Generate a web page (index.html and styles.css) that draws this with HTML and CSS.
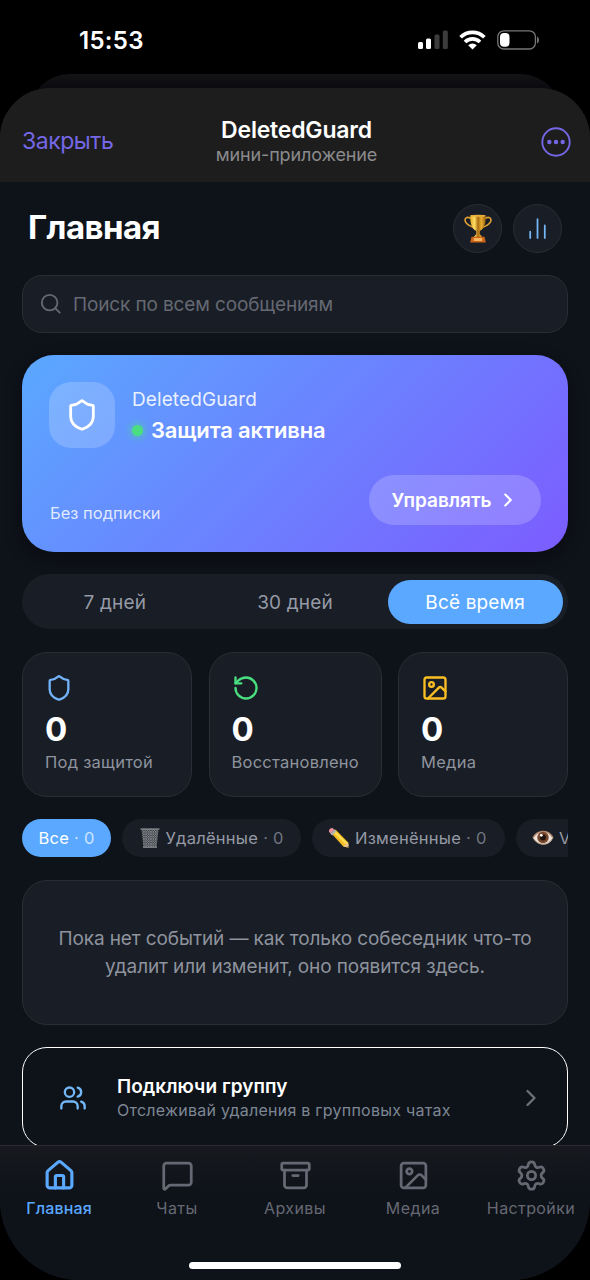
FILE: index.html
```html
<!DOCTYPE html>
<html lang="ru">
<head>
<meta charset="utf-8">
<title>DeletedGuard</title>
<link rel="stylesheet" href="styles.css">
</head>
<body>
<svg class="defs" width="0" height="0" aria-hidden="true">
  <symbol id="shield" viewBox="0 0 24 24"><path d="M20 13c0 5-3.500 7.500-7.660 8.950a1 1 0 0 1-.67-.01C7.500 20.500 4 18 4 13V6a1 1 0 0 1 1-1c2 0 4.500-1.200 6.240-2.720a1.170 1.170 0 0 1 1.520 0C14.510 3.810 17 5 19 5a1 1 0 0 1 1 1z"/></symbol>
  <symbol id="image" viewBox="0 0 24 24"><rect x="3" y="3" width="18" height="18" rx="2"/><circle cx="9" cy="9" r="2"/><path d="m21 15-3.086-3.086a2 2 0 0 0-2.828 0L6 21"/></symbol>
  <symbol id="chevron" viewBox="0 0 24 24"><path d="m9 18 6-6-6-6"/></symbol>
</svg>
<div class="phone">
  <div class="status">
    <span class="time">15:53</span>
    <div class="status-icons">
      <svg width="30" height="19" viewBox="0 0 30 19"><rect x="0" y="12" width="5" height="7" rx="1.500" fill="#fff"/><rect x="8" y="8.500" width="5" height="10.500" rx="1.500" fill="#fff"/><rect x="16.500" y="4.500" width="5" height="14.500" rx="1.500" fill="#3c3c3c"/><rect x="24.800" y="0.500" width="5" height="18.500" rx="1.500" fill="#3c3c3c"/></svg>
      <svg width="27" height="20" viewBox="0 0 27 20"><g fill="none" stroke="#fff" stroke-width="3.700"><path d="M1.600 7.200a17 17 0 0 1 23.800 0"/><path d="M6 12a10.700 10.700 0 0 1 15 0"/></g><path d="M13.500 19.500l-4.300-4.200a6.200 6.200 0 0 1 8.600 0z" fill="#fff"/></svg>
      <svg width="42" height="20" viewBox="0 0 42 20"><rect x=".8" y=".8" width="37.600" height="18.200" rx="6" fill="none" stroke="#777" stroke-width="1.300"/><rect x="3" y="3" width="9.500" height="13.800" rx="4" fill="#fff"/><path d="M40 6.500c2.600 1 2.600 6 0 7z" fill="#777"/></svg>
    </div>
  </div>
  <div class="behind"></div>
  <div class="sheet">
    <header class="bar">
      <span class="close">Закрыть</span>
      <div class="app"><div class="app-name">DeletedGuard</div><div class="app-kind">мини-приложение</div></div>
      <svg class="more" width="30" height="30" viewBox="0 0 30 30"><circle cx="15" cy="15" r="13.700" fill="none" stroke="#7567e6" stroke-width="1.900"/><g fill="#7567e6"><circle cx="8.300" cy="15" r="2.200"/><circle cx="15" cy="15" r="2.200"/><circle cx="21.700" cy="15" r="2.200"/></g></svg>
    </header>
    <main class="content">
      <div class="title-row">
        <h1>Главная</h1>
        <div class="round">
          <svg width="28" height="29" viewBox="0 0 28 29">
            <defs><linearGradient id="gold"><stop offset="0" stop-color="#e6ae2a"/><stop offset=".28" stop-color="#fbdc62"/><stop offset=".5" stop-color="#a96c12"/><stop offset=".72" stop-color="#e6ae2f"/><stop offset="1" stop-color="#a0600d"/></linearGradient></defs>
            <g fill="none" stroke="#dc9e32" stroke-width="1.600"><path d="M7 4.500C3 2 .5 4 1.200 7c.8 3.500 4.300 4.500 7.600 6.200"/><path d="M21 4.500c4-2.500 6.500-.5 5.800 2.500-.8 3.500-4.300 4.500-7.600 6.200"/></g>
            <path d="M6.300 1.500h15.400c.3 7.500-1.400 13.500-5.900 15.500v3l2.600 3.200H9.600l2.600-3.200v-3C7.700 15 6 9 6.300 1.500z" fill="url(#gold)"/>
            <ellipse cx="14" cy="1.800" rx="7.700" ry="1" fill="#e9b13c"/>
            <path d="M7.500 22.700h13l1.300 5.800H6.200z" fill="#c9641a"/><path d="M9.800 24h8.400v3H9.800z" fill="#f7b65d"/>
          </svg>
        </div>
        <div class="round"><svg class="ico sky" width="25" height="25" viewBox="0 0 24 24"><path d="M5 21v-6M12 21V3M19 21V9"/></svg></div>
      </div>
      <div class="search">
        <svg class="ico" width="22" height="22" viewBox="0 0 24 24"><circle cx="10.500" cy="10.500" r="8.500"/><path d="m21.500 21.500-5-5"/></svg>
        <span>Поиск по всем сообщениям</span>
      </div>
      <section class="hero">
        <div class="hero-top">
          <div class="hero-icon"><svg class="ico" width="34" height="34"><use href="#shield"/></svg></div>
          <div><div class="hero-name">DeletedGuard</div><div class="hero-state"><i class="dot"></i>Защита активна</div></div>
        </div>
        <div class="hero-bottom">
          <span class="plan">Без подписки</span>
          <div class="manage">Управлять<svg class="ico" width="22" height="22"><use href="#chevron"/></svg></div>
        </div>
      </section>
      <div class="segments"><span>7 дней</span><span>30 дней</span><span class="active">Всё время</span></div>
      <div class="stats">
        <div class="stat"><svg class="ico blue" width="28" height="28"><use href="#shield"/></svg><b>0</b><span>Под защитой</span></div>
        <div class="stat"><svg class="ico green" width="28" height="28" viewBox="0 0 24 24"><path d="M3 12a9 9 0 1 0 9-9 9.750 9.750 0 0 0-6.740 2.740L3 8"/><path d="M3 3v5h5"/></svg><b>0</b><span>Восстановлено</span></div>
        <div class="stat"><svg class="ico amber" width="28" height="28"><use href="#image"/></svg><b>0</b><span>Медиа</span></div>
      </div>
      <div class="chips">
        <div class="chip on">Все<em>· 0</em></div>
        <div class="chip deleted">
          <svg width="22" height="22" viewBox="0 0 22 22"><defs><pattern id="mesh" width="2.400" height="2.400" patternUnits="userSpaceOnUse"><path d="M0 0l2.400 2.400M2.400 0L0 2.400" stroke="#999da2" stroke-width=".6"/></pattern></defs><path d="M2.500 2h17l-2 18.500h-13z" fill="#373b41"/><path d="M2.500 2h17l-2 18.500h-13z" fill="url(#mesh)"/><path d="M1.500 2h19" stroke="#85898e" stroke-width="1.300"/><path d="M4 20.300h14" stroke="#7b7f84" stroke-width="1.300"/></svg>
          Удалённые<em>· 0</em></div>
        <div class="chip edited">
          <svg width="22" height="22" viewBox="0 0 22 22"><path d="M3.500 6.500l4-4L20 15.200l1 5.600-5.700-1.200z" fill="#f2bd25"/><path d="M5.800 4.200L18.800 17" stroke="#ffdf55" stroke-width="2"/><path d="M1 4.500Q.8 1 4.500 1l2 1.800-4 4z" fill="#ec939b"/><path d="M2.400 6.700l4.200-4.100 1.700 1.700-4.100 4.100z" fill="#aeb4b7"/><path d="M15.300 19.600l4.700-4.400 1 5.600z" fill="#eac391"/><path d="M19 20.300l1.700-1.500.3 2z" fill="#423f39"/></svg>
          Изменённые<em>· 0</em></div>
        <div class="chip views">
          <svg width="22" height="22" viewBox="0 0 22 22"><path d="M1 11C4.500 3.500 16 1 21 11c-4 9-15.500 8.500-20 0z" fill="#eee5dc"/><path d="M1 11C4.500 3.500 16 1 21 11" fill="none" stroke="#b68c70" stroke-width="1.500"/><circle cx="11" cy="10.500" r="5.700" fill="#76462c"/><circle cx="11" cy="10.500" r="3" fill="#20130e"/><circle cx="9.300" cy="8.300" r="1.400" fill="#fff"/><path d="M2 12c4 6 13 7 18 0" fill="none" stroke="#c9a58b" stroke-width="1"/></svg>
          V</div>
      </div>
      <div class="empty">Пока нет событий — как только собеседник что-то<br>удалит или изменит, оно появится здесь.</div>
      <div class="group">
        <svg class="ico sky" width="28" height="28" viewBox="0 0 24 24"><path d="M16 21v-2a4 4 0 0 0-4-4H6a4 4 0 0 0-4 4v2"/><circle cx="9" cy="7" r="4"/><path d="M16 3.128a4 4 0 0 1 0 7.744M22 21v-2a4 4 0 0 0-3-3.870"/></svg>
        <div class="group-text"><div class="group-title">Подключи группу</div><div class="group-sub">Отслеживай удаления в групповых чатах</div></div>
        <svg class="ico arrow" width="28" height="28"><use href="#chevron"/></svg>
      </div>
    </main>
    <footer class="footer">
      <nav class="tabs">
        <div class="tab current"><svg class="ico" width="33" height="33" viewBox="0 0 24 24"><path d="M15 21v-8a1 1 0 0 0-1-1h-4a1 1 0 0 0-1 1v8"/><path d="M3 10a2 2 0 0 1 .709-1.528l7-6a2 2 0 0 1 2.582 0l7 6A2 2 0 0 1 21 10v9a2 2 0 0 1-2 2H5a2 2 0 0 1-2-2z"/></svg><span>Главная</span></div>
        <div class="tab"><svg class="ico" width="33" height="33" viewBox="0 0 24 24"><path d="M22 17a2 2 0 0 1-2 2H6.828a2 2 0 0 0-1.414.586l-2.202 2.202A.71.71 0 0 1 2 21.286V5a2 2 0 0 1 2-2h16a2 2 0 0 1 2 2z"/></svg><span>Чаты</span></div>
        <div class="tab"><svg class="ico" width="33" height="33" viewBox="0 0 24 24"><rect x="2" y="3" width="20" height="5" rx="1"/><path d="M4 8v11a2 2 0 0 0 2 2h12a2 2 0 0 0 2-2V8M10 12h4"/></svg><span>Архивы</span></div>
        <div class="tab"><svg class="ico" width="33" height="33"><use href="#image"/></svg><span>Медиа</span></div>
        <div class="tab"><svg class="ico" width="33" height="33" viewBox="0 0 24 24"><path d="M9.671 4.136a2.340 2.340 0 0 1 4.659 0 2.340 2.340 0 0 0 3.319 1.915 2.340 2.340 0 0 1 2.330 4.033 2.340 2.340 0 0 0 0 3.831 2.340 2.340 0 0 1-2.330 4.033 2.340 2.340 0 0 0-3.319 1.915 2.340 2.340 0 0 1-4.659 0 2.340 2.340 0 0 0-3.320-1.915 2.340 2.340 0 0 1-2.330-4.033 2.340 2.340 0 0 0 0-3.831A2.340 2.340 0 0 1 6.350 6.051a2.340 2.340 0 0 0 3.319-1.915"/><circle cx="12" cy="12" r="3"/></svg><span>Настройки</span></div>
      </nav>
      <div class="home-indicator"></div>
    </footer>
  </div>
</div>
</body>
</html>
```
FILE: styles.css
```css
* { box-sizing: border-box; }
body { margin: 0; background: #000; font-family: Inter, "Liberation Sans", sans-serif; color: #fff; }
.defs { position: absolute; }
svg { display: block; flex: none; }
.ico { fill: none; stroke: currentColor; stroke-width: 2; stroke-linecap: round; stroke-linejoin: round; }
.phone { width: 590px; height: 1280px; overflow: hidden; display: flex; flex-direction: column; background: #000; white-space: nowrap; }
.status { height: 74px; flex: none; display: flex; justify-content: space-between; padding: 30px 51px 0 79px; }
.time { font-size: 24px; line-height: 22px; font-weight: 600; letter-spacing: .3px; }
.status-icons { display: flex; gap: 11px; }
.behind { height: 56px; flex: none; margin: 0 28px -42px; border-radius: 42px 42px 0 0; background: linear-gradient(#131316, #0b0b0f 14px); }
.sheet { position: relative; flex: 1; min-height: 0; display: flex; flex-direction: column; overflow: hidden; background: #0e1219; border-radius: 50px 50px 80px 80px; }
.bar { height: 94px; flex: none; display: grid; grid-template-columns: 1fr auto 1fr; align-items: center; padding: 11px 19px 0 22px; background: #1d1d1d; }
.close { font-size: 23px; color: #7567e6; letter-spacing: -.45px; }
.app { text-align: center; }
.app-name { font-size: 23px; line-height: 28px; font-weight: 600; letter-spacing: -.2px; }
.app-kind { font-size: 18px; line-height: 21px; color: #8b8b8d; letter-spacing: -.15px; }
.more { justify-self: end; margin-top: 2px; }
.content { flex: 1; min-height: 0; overflow: hidden; padding: 22px 22px 0; display: flex; flex-direction: column; }
.content > * { flex: none; }
.title-row { height: 49px; display: flex; align-items: center; gap: 11px; padding: 0 6px; }
h1 { margin: -3px auto 0 0; font-size: 33px; line-height: 40px; font-weight: 700; letter-spacing: -.6px; }
.round { width: 49px; height: 49px; border-radius: 50%; border: 1.4px solid #292d34; background: #191d25; display: grid; place-items: center; }
.round .ico { stroke-width: 1.7; }
.sky { color: #73b7f6; }
.search { height: 58px; margin-top: 22px; border: 1.4px solid #2a2d34; border-radius: 20px; background: #191d25; display: flex; align-items: center; gap: 11px; padding-left: 17px; color: #656973; font-size: 19px; letter-spacing: -.13px; }
.hero { height: 197px; margin-top: 22px; border-radius: 32px; padding: 27px; display: flex; flex-direction: column; justify-content: space-between; background: linear-gradient(135deg, #5aa8ff, #7c5cff); box-shadow: 0 6px 18px #0005; }
.hero-top { display: flex; gap: 17px; }
.hero-icon { width: 66px; height: 66px; border-radius: 22px; display: grid; place-items: center; background: #ffffff30; }
.hero-name { margin-top: 4px; font-size: 19px; line-height: 27px; letter-spacing: .1px; color: #ffffffe0; }
.hero-state { display: flex; align-items: center; gap: 8px; font-size: 22px; line-height: 34px; font-weight: 600; letter-spacing: -.15px; }
.dot { width: 11px; height: 11px; border-radius: 50%; background: #4ade80; box-shadow: 0 0 8px #4ade80; }
.hero-bottom { display: flex; justify-content: space-between; align-items: flex-end; }
.plan { padding-left: 1px; font-size: 16.500px; line-height: 24px; color: #ffffffd0; }
.manage { width: 172px; height: 50px; border-radius: 25px; background: #ffffff30; display: flex; align-items: center; justify-content: center; gap: 5px; font-size: 19px; font-weight: 600; }
.manage .ico { stroke-width: 2.3; }
.segments { height: 55px; margin-top: 22px; padding: 5.500px; border-radius: 28px; background: #191d25; display: grid; grid-template-columns: repeat(3, 1fr); gap: 5.500px; font-size: 19px; letter-spacing: .15px; color: #959aa6; }
.segments span { display: grid; place-items: center; border-radius: 22px; padding-top: 1px; }
.segments .active { color: #fff; background: #5aa8ff; }
.stats { height: 145px; margin-top: 23px; display: grid; grid-template-columns: 170px 173px 170px; justify-content: space-between; }
.stat { border: 1.4px solid #2a2d34; border-radius: 25px; background: #191d25; padding: 21px 22px; }
.stat b { display: block; margin-top: 7px; font-size: 33px; line-height: 40px; font-weight: 700; }
.stat span { display: block; margin-top: 2px; font-size: 16.500px; line-height: 23px; color: #8e939e; letter-spacing: .25px; }
.blue { color: #72b2fa; }
.green { color: #4ade80; }
.amber { color: #fbbf24; }
.chips { height: 38px; margin-top: 22px; display: flex; gap: 11px; overflow: hidden; }
.chip { flex: none; height: 38px; border-radius: 19px; padding: 0 16.500px; background: #191d25; display: flex; align-items: center; font-size: 16.500px; color: #959aa6; letter-spacing: .25px; }
.chip svg { margin-right: 5px; }
.chip em { font-style: normal; margin-left: 5px; opacity: .7; }
.chip.on { width: 89px; background: #5aa8ff; color: #fff; }
.chip.deleted { width: 178.500px; }
.chip.edited { width: 193px; }
.chip.views { width: 150px; }
.empty { height: 145px; margin-top: 23px; border: 1.4px solid #2a2d34; border-radius: 25px; background: #191d25; color: #8e939e; font-size: 19px; line-height: 28px; letter-spacing: -.1px; text-align: center; padding-top: 44px; }
.group { height: 101px; margin-top: 22px; border: 1.5px solid #fff; border-radius: 25px; display: flex; align-items: center; padding: 1px 22px 0 36px; }
.group-text { flex: 1; margin-left: 30px; }
.group-title { font-size: 19px; line-height: 25px; font-weight: 600; letter-spacing: .05px; }
.group-sub { font-size: 16px; line-height: 23px; color: #7d8794; letter-spacing: .25px; }
.arrow { color: #6b707b; }
.footer { height: 135px; flex: none; border-top: 1.4px solid #292b30; background: linear-gradient(#17191e, #0e1219 50px); display: flex; flex-direction: column; justify-content: space-between; align-items: center; padding-bottom: 11px; }
.tabs { width: 100%; display: grid; grid-template-columns: repeat(5, 118px); padding-top: 13px; color: #666973; }
.tab { display: flex; flex-direction: column; align-items: center; font-size: 16px; line-height: 22px; gap: 5px; letter-spacing: .4px; }
.current { color: #5aa8ff; font-weight: 500; letter-spacing: .15px; }
.current .ico { stroke-width: 2.3; }
.home-indicator { width: 212px; height: 7px; border-radius: 4px; background: #fff; }
```
